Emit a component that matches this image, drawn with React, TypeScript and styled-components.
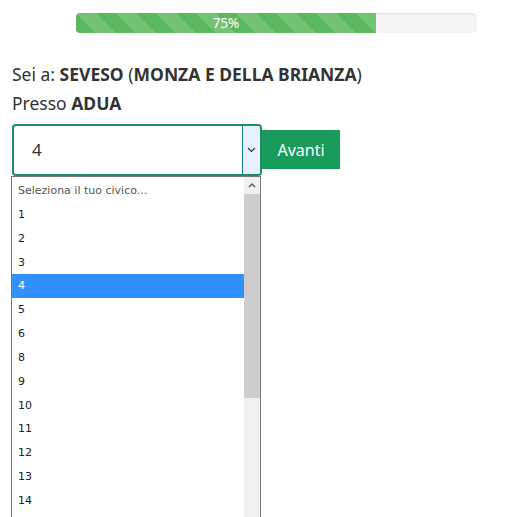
import styled, { createGlobalStyle } from "styled-components";

const GlobalStyle = createGlobalStyle`
  html {
    overflow: hidden;
  }
  html, body {
    margin: 0;
    padding: 0;
    background: #ffffff;
  }
  body {
    font-family: "Noto Sans", "Open Sans", Arial, sans-serif;
    color: #333333;
  }
`;

const civici = ["1", "2", "3", "4", "5", "6", "8", "9", "10", "11", "12", "13", "14"];
const selected = "4";

export default function App() {
  return (
    <>
      <GlobalStyle />
      <Page>
        <Progress>
          <ProgressBar style={{ width: "75%" }}>75%</ProgressBar>
        </Progress>
        <Line>
          Sei a: <b>SEVESO</b> (<b>MONZA E DELLA BRIANZA</b>)
        </Line>
        <Line>
          Presso <b>ADUA</b>
        </Line>
        <FormRow>
          <SelectWrap>
            <SelectBox>
              <SelectValue>{selected}</SelectValue>
              <ArrowCell>
                <svg width="9" height="6" viewBox="0 0 9 6">
                  <path d="M1 1 L4.5 4.5 L8 1" fill="none" stroke="#333" strokeWidth="1.2" />
                </svg>
              </ArrowCell>
            </SelectBox>
            <ListBox>
              <Options>
                <Option $muted>Seleziona il tuo civico...</Option>
                {civici.map((c) => (
                  <Option key={c} $active={c === selected}>
                    {c}
                  </Option>
                ))}
              </Options>
              <ScrollTrack>
                <ScrollArrow>
                  <svg width="8" height="5" viewBox="0 0 8 5">
                    <path d="M1 4 L4 1 L7 4" fill="none" stroke="#555" strokeWidth="1.4" />
                  </svg>
                </ScrollArrow>
                <Thumb />
              </ScrollTrack>
            </ListBox>
          </SelectWrap>
          <Button>Avanti</Button>
        </FormRow>
      </Page>
    </>
  );
}

const Page = styled.div`
  padding: 13px 0 0 12px;
`;

const Progress = styled.div`
  margin-left: 64px;
  width: 400px;
  height: 20px;
  background: #f5f5f5;
  border-radius: 4px;
  box-shadow: inset 0 1px 2px rgba(0, 0, 0, 0.1);
  overflow: hidden;
  margin-bottom: 27px;
`;

const ProgressBar = styled.div`
  height: 100%;
  background-color: #5cb85c;
  background-image: linear-gradient(
    45deg,
    rgba(255, 255, 255, 0.15) 25%,
    transparent 25%,
    transparent 50%,
    rgba(255, 255, 255, 0.15) 50%,
    rgba(255, 255, 255, 0.15) 75%,
    transparent 75%,
    transparent
  );
  background-size: 40px 40px;
  color: #ffffff;
  font-size: 13.5px;
  line-height: 20px;
  text-align: center;
`;

const Line = styled.div`
  font-size: 17.5px;
  line-height: 29px;
  b {
    font-weight: 700;
  }
`;

const FormRow = styled.div`
  display: flex;
  align-items: flex-start;
  margin-top: 6px;
`;

const SelectWrap = styled.div`
  width: 250px;
  display: flex;
  flex-direction: column;
`;

const SelectBox = styled.div`
  height: 52px;
  box-sizing: border-box;
  border: 2px solid #1f8a64;
  border-radius: 4px;
  display: flex;
  overflow: hidden;
`;

const SelectValue = styled.div`
  flex: 1;
  padding-left: 18px;
  font-size: 17px;
  line-height: 48px;
  color: #333;
`;

const ArrowCell = styled.div`
  width: 17px;
  background: #e5f1fb;
  border-left: 1px solid #1b7fa1;
  display: flex;
  align-items: center;
  justify-content: center;
`;

const ListBox = styled.div`
  margin-left: -1px;
  width: 250px;
  height: 345px;
  box-sizing: border-box;
  border: 1px solid #767676;
  border-bottom: none;
  background: #ffffff;
  display: flex;
  overflow: hidden;
`;

const Options = styled.div`
  flex: 1;
  padding-top: 2px;
`;

const Option = styled.div<{ $active?: boolean; $muted?: boolean }>`
  height: 23.85px;
  line-height: 23.85px;
  padding-left: 6px;
  font-family: "DejaVu Sans", Tahoma, sans-serif;
  font-size: 11px;
  color: ${(p) => (p.$active ? "#ffffff" : p.$muted ? "#555555" : "#222222")};
  background: ${(p) => (p.$active ? "#3390ff" : "transparent")};
`;

const ScrollTrack = styled.div`
  width: 16px;
  background: #f0f0f0;
  display: flex;
  flex-direction: column;
`;

const ScrollArrow = styled.div`
  height: 17px;
  display: flex;
  align-items: center;
  justify-content: center;
`;

const Thumb = styled.div`
  height: 204px;
  background: #cdcdcd;
`;

const Button = styled.button`
  margin-top: 6px;
  width: 78px;
  height: 39px;
  border: none;
  background: #1a9b5e;
  color: #ffffff;
  font-family: "Noto Sans", "Open Sans", Arial, sans-serif;
  font-size: 16px;
  padding: 0;
`;
